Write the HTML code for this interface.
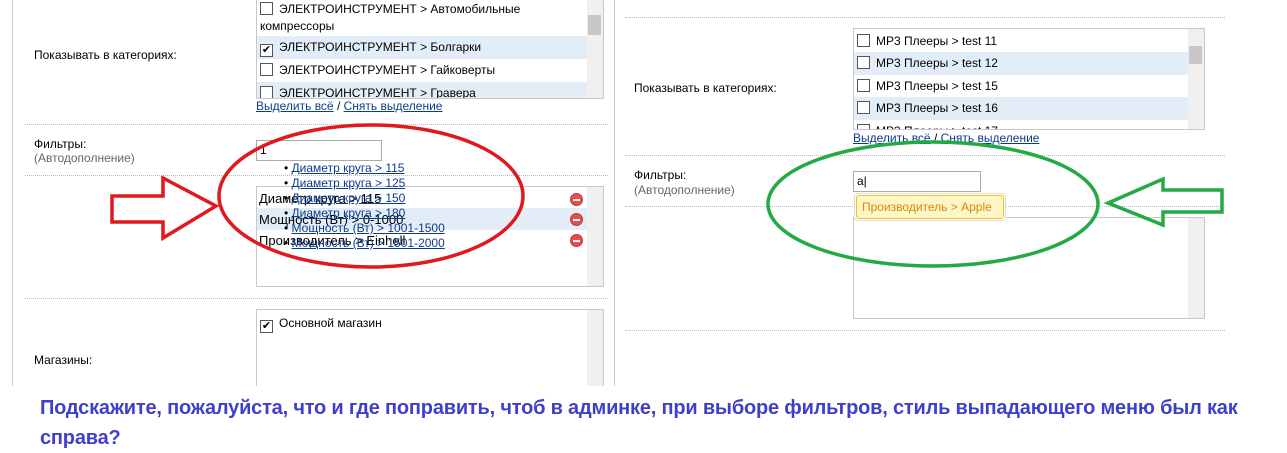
<!DOCTYPE html>
<html><head><meta charset="utf-8"><style>
*{margin:0;padding:0;box-sizing:border-box}
body{width:1287px;height:450px;background:#fff;position:relative;overflow:hidden;font-family:"Liberation Sans",sans-serif;font-size:12px;color:#000}
.a{position:absolute;white-space:nowrap}
.dot{position:absolute;height:0;border-top:1px dotted #bbb}
.box{position:absolute;border:1px solid #c8c8c8;background:#fff;overflow:hidden}
.sb{position:absolute;right:0;top:0;bottom:0;width:16px;background:#f0f0f0}
.cb{display:inline-block;width:13px;height:13px;border:1px solid #555;background:#fff;vertical-align:-2px;margin-right:6px;position:relative;font-size:11px;line-height:11px;text-align:center}
.row{position:absolute;left:0;right:16px;padding-left:3px;height:23px;line-height:23px}
.hl{background:#e3edf7}
a{color:#0b3b8c;text-decoration:underline}
.gray{color:#666}
.minus{position:absolute;width:13px;height:13px;border-radius:50%;background:#e05050;border:1px solid #c33}
.minus:after{content:"";position:absolute;left:2px;right:2px;top:5px;height:2px;background:#fff}
</style></head><body>
<div style="position:absolute;left:12px;top:0;width:1px;height:386px;background:#ccc"></div>
<div style="position:absolute;left:614px;top:0;width:1px;height:386px;background:#ccc"></div>

<div class="box" style="left:256px;top:-2px;width:348px;height:101px">
 <div class="sb"><div style="position:absolute;top:16px;left:1px;width:13px;height:20px;background:#c8c8c8"></div></div>
 <div class="row" style="top:2px;height:36px;line-height:17px;white-space:normal"><span class="cb"></span>ЭЛЕКТРОИНСТРУМЕНТ &gt; Автомобильные компрессоры</div>
 <div class="row hl" style="top:37px"><span class="cb">✔</span>ЭЛЕКТРОИНСТРУМЕНТ &gt; Болгарки</div>
 <div class="row" style="top:60px"><span class="cb"></span>ЭЛЕКТРОИНСТРУМЕНТ &gt; Гайковерты</div>
 <div class="row hl" style="top:83px"><span class="cb"></span>ЭЛЕКТРОИНСТРУМЕНТ &gt; Гравера</div>
</div>
<div class="a" style="left:256px;top:99px"><a>Выделить всё</a> / <a>Снять выделение</a></div>
<div class="a" style="left:34px;top:48px">Показывать в категориях:</div>
<div class="dot" style="left:25px;top:124px;width:583px"></div>
<div class="a" style="left:34px;top:137px">Фильтры:</div>
<div class="a gray" style="left:34px;top:151px">(Автодополнение)</div>
<div style="position:absolute;left:256px;top:140px;width:126px;height:21px;border:1px solid #aaa;padding-left:3px;line-height:19px">1</div>
<div class="dot" style="left:25px;top:175px;width:583px"></div>
<div class="box" style="left:256px;top:186px;width:348px;height:101px">
 <div class="sb"></div>
 <div class="row hl" style="top:21px;height:22px"></div>
 <div class="a" style="left:2px;top:4px;font-size:13px">Диаметр круга &gt; 115</div>
 <div class="a" style="left:2px;top:25px;font-size:13px">Мощность (Вт) &gt; 0-1000</div>
 <div class="a" style="left:2px;top:46px;font-size:13px">Производитель &gt; Einhell</div>
 <div class="minus" style="left:313px;top:6px"></div>
 <div class="minus" style="left:313px;top:26px"></div>
 <div class="minus" style="left:313px;top:47px"></div>
</div>
<div class="a" style="left:284px;top:161px;line-height:15px">
 • <a>Диаметр круга &gt; 115</a><br>• <a>Диаметр круга &gt; 125</a><br>• <a>Диаметр круга &gt; 150</a><br>• <a>Диаметр круга &gt; 180</a><br>• <a>Мощность (Вт) &gt; 1001-1500</a><br>• <a>Мощность (Вт) &gt; 1501-2000</a>
</div>
<div class="dot" style="left:25px;top:298px;width:583px"></div>
<div class="box" style="left:256px;top:309px;width:348px;height:90px"><div class="sb"></div>
 <div class="a" style="left:3px;top:6px"><span class="cb">✔</span>Основной магазин</div></div>
<div class="a" style="left:34px;top:353px">Магазины:</div>
<div style="position:absolute;left:0;top:386px;width:620px;height:64px;background:#fff"></div>

<div class="dot" style="left:625px;top:17px;width:600px"></div>
<div class="a" style="left:634px;top:81px">Показывать в категориях:</div>
<div class="box" style="left:853px;top:28px;width:352px;height:102px">
 <div class="sb"><div style="position:absolute;top:17px;left:1px;width:13px;height:18px;background:#c8c8c8"></div></div>
 <div class="row" style="top:1px"><span class="cb"></span>MP3 Плееры &gt; test 11</div>
 <div class="row hl" style="top:23px"><span class="cb"></span>MP3 Плееры &gt; test 12</div>
 <div class="row" style="top:46px"><span class="cb"></span>MP3 Плееры &gt; test 15</div>
 <div class="row hl" style="top:68px"><span class="cb"></span>MP3 Плееры &gt; test 16</div>
 <div class="row" style="top:91px"><span class="cb"></span>MP3 Плееры &gt; test 17</div>
</div>
<div class="a" style="left:853px;top:131px"><a>Выделить всё</a> / <a>Снять выделение</a></div>
<div class="dot" style="left:625px;top:155px;width:600px"></div>
<div class="a" style="left:634px;top:168px">Фильтры:</div>
<div class="a gray" style="left:634px;top:183px">(Автодополнение)</div>
<div style="position:absolute;left:853px;top:171px;width:128px;height:21px;border:1px solid #aaa;padding-left:3px;line-height:19px">a|</div>
<div class="dot" style="left:625px;top:206px;width:600px"></div>
<div class="box" style="left:853px;top:217px;width:352px;height:102px"><div class="sb"></div></div>
<div class="a" style="left:854px;top:193px;width:152px;height:28px;border:1px solid #ddd;border-radius:3px;background:#fff;padding:1px">
 <div style="height:24px;background:#fff6c6;border:1px solid #f3c21a;border-radius:3px;color:#d88a08;line-height:22px;padding-left:5px">Производитель &gt; Apple</div></div>
<div class="dot" style="left:625px;top:330px;width:600px"></div>

<svg width="1287" height="450" style="position:absolute;left:0;top:0" fill="none">
 <ellipse cx="371" cy="196" rx="152" ry="71" stroke="#e0191f" stroke-width="3.5"/>
 <path d="M112 196 H163 V178 L216 206 L163 238 V222 H112 Z" stroke="#e0191f" stroke-width="3.5"/>
 <ellipse cx="933" cy="204" rx="165" ry="62" stroke="#22aa44" stroke-width="3.5"/>
 <path d="M1222 190 H1163 V179 L1108 203 L1163 225 V212 H1222 Z" stroke="#22aa44" stroke-width="3.5"/>
</svg>

<div class="a" style="left:40px;top:393px;font-size:20px;font-weight:bold;color:#3f3fcc;line-height:30px;white-space:normal;width:1225px;letter-spacing:-0.2px">Подскажите, пожалуйста, что и где поправить, чтоб в админке, при выборе фильтров, стиль выпадающего меню был как справа?</div>
</body></html>
